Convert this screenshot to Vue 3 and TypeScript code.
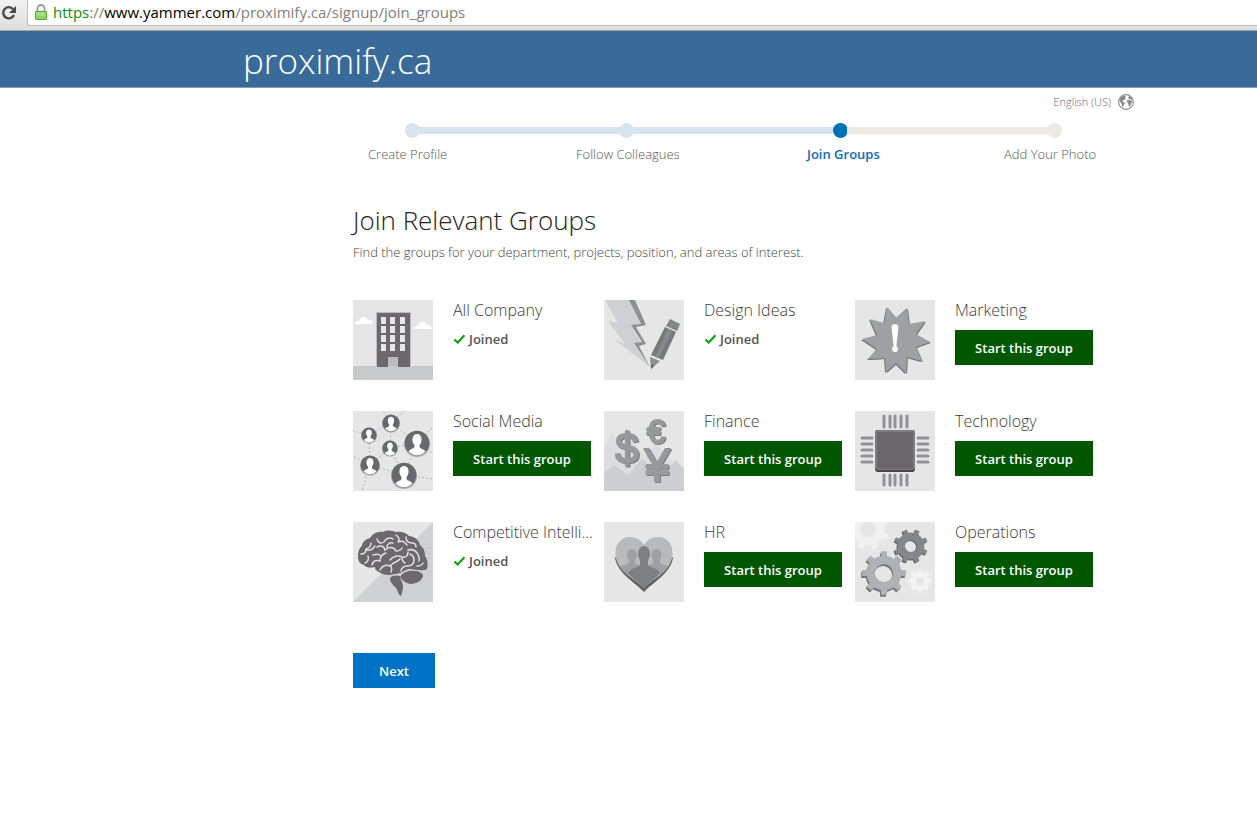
<script setup lang="ts">
type IconName =
  | 'building' | 'design' | 'burst' | 'people' | 'money'
  | 'chip' | 'brain' | 'heart' | 'gears'

interface Group {
  name: string
  icon: IconName
  joined: boolean
}

interface Step {
  label: string
  state: 'done' | 'current' | 'todo'
}

const steps: Step[] = [
  { label: 'Create Profile', state: 'done' },
  { label: 'Follow Colleagues', state: 'done' },
  { label: 'Join Groups', state: 'current' },
  { label: 'Add Your Photo', state: 'todo' },
]

const groups: Group[] = [
  { name: 'All Company', icon: 'building', joined: true },
  { name: 'Design Ideas', icon: 'design', joined: true },
  { name: 'Marketing', icon: 'burst', joined: false },
  { name: 'Social Media', icon: 'people', joined: false },
  { name: 'Finance', icon: 'money', joined: false },
  { name: 'Technology', icon: 'chip', joined: false },
  { name: 'Competitive Intelli...', icon: 'brain', joined: true },
  { name: 'HR', icon: 'heart', joined: false },
  { name: 'Operations', icon: 'gears', joined: false },
]

const burst =
  '32,7 41,18 52,8 54,24 70,21 61,34 75,42 61,47 67,61 52,57 51,73 41,63 31,72 30,58 13,59 22,49 7,39 22,35 15,19 29,23'

const avatars = [
  { x: 38, y: 12, r: 9 },
  { x: 16, y: 24, r: 8 },
  { x: 37, y: 37, r: 8 },
  { x: 64, y: 32, r: 13 },
  { x: 17, y: 54, r: 10 },
  { x: 51, y: 64, r: 13 },
]

// Outline of a toothed wheel with a round hole, centred on (cx, cy).
function gear(cx: number, cy: number, outer: number, hole: number, teeth: number, turn: number): string {
  const inner = outer * 0.79
  const step = (Math.PI * 2) / teeth
  const at = (r: number, a: number) =>
    `${(cx + r * Math.cos(a)).toFixed(2)} ${(cy + r * Math.sin(a)).toFixed(2)}`
  const parts: string[] = []
  for (let i = 0; i < teeth; i++) {
    const a = i * step + turn
    parts.push(at(inner, a - step * 0.23), at(outer, a - step * 0.17), at(outer, a + step * 0.17), at(inner, a + step * 0.23))
    parts.push(at(inner, a + step * 0.5))
  }
  return (
    `M${parts.join('L')}Z` +
    `M${cx - hole} ${cy}a${hole} ${hole} 0 1 0 ${hole * 2} 0a${hole} ${hole} 0 1 0 ${-hole * 2} 0Z`
  )
}
</script>

<template>
  <div class="browser-bar">
    <button class="reload" type="button" aria-label="Reload">
      <svg viewBox="0 0 18 18" width="18" height="18">
        <path d="M13.2 5.2A5.6 5.6 0 1 0 14 11" fill="none" stroke="#4a4a4a" stroke-width="2.4" />
        <path d="M16 2v7H9z" fill="#4a4a4a" />
      </svg>
    </button>
    <div class="address">
      <svg viewBox="0 0 12 16" width="12" height="16" aria-hidden="true">
        <path d="M2.500 8V4.500a3.500 3.500 0 0 1 7 0V8" fill="none" stroke="#999" stroke-width="1.800" />
        <rect x="0.500" y="7.500" width="11" height="8" rx="0.500" fill="#8fd46a" stroke="#5aa53a" />
        <path d="M1.500 9h9M1.500 11h9" stroke="#b5e89a" />
      </svg>
      <span class="url"><span class="scheme">https</span>://<span class="host">www.yammer.com</span>/proximify.ca/signup/join_groups</span>
    </div>
  </div>

  <header class="band">
    <div class="network">proximify.ca</div>
  </header>

  <div class="page">
    <div class="language-row">
      <button class="language" type="button">
        English (US)
        <svg viewBox="0 0 16 16" width="16" height="16" aria-hidden="true">
          <circle cx="8" cy="8" r="7.400" fill="#fff" stroke="#8b8b8b" stroke-width="1.100" />
          <path d="M1.200 5.500 3 3l2.500-1.200L8 2.200 7 3.500l.8 1L6.200 6 5 6.200 4.300 7.500l2.200.7.3 1.500-1.300 1.600-.5 2.400-1-1.200-.2-2.500L2.200 8z" fill="#8b8b8b" />
          <path d="M10 3.200 11.500 2l2 1.500 1.300 2.700-1.300-.4-1-1-1.300.5zM9 6.300l2-.6 2.500.8.8 1.700-1.300 1.600-.5 2-1.300 1-.8-2.200-.3-1.600L8.800 8z" fill="#8b8b8b" />
        </svg>
      </button>
    </div>

    <nav class="progress" aria-label="Sign-up progress">
      <div class="track">
        <template v-for="(step, i) in steps" :key="step.label">
          <span v-if="i > 0" class="bar" :class="step.state" />
          <span class="dot" :class="step.state" />
        </template>
      </div>
      <ol class="labels">
        <li v-for="step in steps" :key="step.label" :class="step.state">{{ step.label }}</li>
      </ol>
    </nav>

    <main class="content">
      <h1>Join Relevant Groups</h1>
      <p class="intro">Find the groups for your department, projects, position, and areas of interest.</p>

      <ul class="groups">
        <li v-for="group in groups" :key="group.name" class="group">
          <svg class="picture" viewBox="0 0 80 80" width="80" height="80" aria-hidden="true">
            <rect width="80" height="80" fill="#e6e6e7" />

            <g v-if="group.icon === 'building'">
              <rect y="66" width="80" height="14" fill="#c8c9cb" />
              <path d="M1 24c1-3 3-3 5-3 1-5 7-6 9-1 3-1 5 1 5 4z" fill="#fff" />
              <path d="M60 29c1-3 3-3 5-3 1-5 7-6 9-1 2-1 5 1 5 4z" fill="#fff" />
              <rect x="23" y="12" width="35" height="54" fill="#bcbcbe" />
              <path d="M24 13h33v54H45V57H35v10H24z" fill="#6b696b" />
              <g fill="#e6e6e7">
                <template v-for="y in [17, 26, 35, 44]" :key="y">
                  <rect v-for="x in [28, 37, 47]" :key="x" :x="x" :y="y" width="5" height="7" />
                </template>
              </g>
            </g>

            <g v-else-if="group.icon === 'design'">
              <path d="M1 0l13 23-10-2 17 23-10-4 35 27-15-22 7-1-11-18 10-1L27 0z" fill="#cfd0d3" />
              <path d="M25 0h6l11 25-10 2 10 17-7 2 11 21-16-24 8-1-11-17 10-1z" fill="#8f9093" />
              <path d="M66 19l10 5-3 7-11-5z" fill="#858689" />
              <path d="M61 27l11 5-13 28-12-5z" fill="#77787b" />
              <path d="M64 29l4 2-13 27-4-1z" fill="#88898c" />
              <path d="M46 57l10 4-9 8z" fill="#8d8e91" />
              <path d="M47 64l3 2-3 3z" fill="#606164" />
            </g>

            <g v-else-if="group.icon === 'burst'">
              <polygon :points="burst" fill="#77787b" transform="translate(1 1)" />
              <polygon :points="burst" fill="#77787b" transform="translate(-1 1)" />
              <polygon :points="burst" fill="#9fa0a3" />
              <path d="M36.500 27c0-4 7-4 7 0l-2 18c0 2-3 2-3 0z" fill="#fff" />
              <circle cx="40" cy="49" r="3" fill="#fff" />
            </g>

            <g v-else-if="group.icon === 'people'">
              <path d="M38 12 30 0M38 12 16 24 0 20M38 12l26 20L80 16M16 24l1 30M37 37 17 54l34 10M37 37l27-5L51 64l29 4M38 12l-1 25 14 27M17 54 0 45M17 54 9 80M51 64 45 80M64 32l16 10M38 12 51 0" fill="none" stroke="#b3b4b7" stroke-width="1" stroke-dasharray="2 2" />
              <g v-for="(a, i) in avatars" :key="i" :transform="`translate(${a.x} ${a.y}) scale(${a.r / 10})`">
                <circle cy="0.800" r="10" fill="#aaabae" />
                <circle r="9.500" fill="#68696c" />
                <path d="M-6.500 6.500c1-2 4-2 4.500-3.500v-1.500C-4.500-1-4-7 0-7s4.500 6 2 8.500V3c.5 1.500 3.500 1.500 4.500 3.500A9 9 0 0 1-6.500 6.500z" fill="#fff" />
              </g>
            </g>

            <g v-else-if="group.icon === 'money'">
              <path d="M0 35 8 22l9 12 8-8 16 20 10-14 18 18 11 12v18H0z" fill="#dcdde0" />
              <path d="M0 62l10-8 14 10 14-16 18 15 8-5 8-9 8 9v22H0z" fill="#cdced2" />
              <g class="coin-signs" text-anchor="middle">
                <text x="23" y="52" font-size="42">$</text>
                <text x="52" y="32" font-size="33">€</text>
                <text x="53" y="70" font-size="46">¥</text>
              </g>
            </g>

            <g v-else-if="group.icon === 'chip'">
              <g stroke="#929295" stroke-width="3" stroke-linecap="round">
                <path v-for="x in [29, 35, 40, 46, 52]" :key="'v' + x" :d="`M${x} 5v11M${x} 64v10`" />
                <path v-for="y in [27, 33, 39, 45, 51]" :key="'h' + y" :d="`M7 ${y}h10M63 ${y}h10`" />
              </g>
              <rect x="20" y="19" width="40" height="42" rx="3" fill="#454446" />
              <rect x="20" y="19" width="40" height="40" rx="3" fill="#7e7d7f" />
              <rect x="22" y="21" width="36" height="37" rx="1" fill="#6a686a" />
            </g>

            <g v-else-if="group.icon === 'brain'">
              <path d="M80 0v80H0z" fill="#cfd0d2" />
              <path d="M5 35c0-5 1-9 4-11 0-4 4-7 8-8 3-5 8-7 13-6 5-3 10-1 13 0 6-1 10 1 13 4 5 0 10 4 11 9 4 3 5 7 5 11 3 4 3 9 2 13-5 3-12 0-18 0-5 1-8 5-14 5-6 2-12 1-16-2-3-1-4-3-4-5-4 1-9 1-11-2-4-1-6-4-6-8z" fill="#6b696b" />
              <path d="M8 32c3 0 5-2 5-5 3-1 5-3 5-6M13 28c4 1 7-1 9-4M19 43c1-5 5-5 8-4 0-5 3-7 6-8M12 41c3-1 4-4 3-7M20 33c3-1 6-1 8 1M24 17c1 4 4 5 7 3 2-4 6-5 9-3M24 25c4-2 7-1 8 3 4-4 9-3 11 1 3 0 5-1 6-3M34 25c0-3 3-5 6-4M43 13c3 2 4 5 2 7M45 20c4-2 7 0 9 3M53 15c0 4 2 6 6 6 3 0 4 2 4 4M27 48c2-4 6-6 10-4 3-4 8-4 10-7M38 44c1 2 1 4 0 6M37 38c3-4 8-5 12-3 4 1 6-2 6-5M48 49c0-3 3-5 6-5 4 0 7-2 7-6M61 38c0-3-2-5-4-6M55 28c4-1 7 0 9 3 2 3 3 5 2 8M64 44c3 0 5-1 6-3M49 35c0 3 1 5 3 6" fill="none" stroke="#dedfe0" stroke-width="1.500" stroke-linecap="round" />
              <path d="M47 55c3-5 9-7 14-6 5 0 9 2 9 5-1 5-7 8-13 8-5-1-8-4-10-7z" fill="#6b696b" />
              <path d="M37 56c2-3 7-3 10-2 0 4 3 6 3 10 0 4-1 7-2 10-3-1-3-6-5-8-3-3-6-6-6-10z" fill="#6b696b" />
            </g>

            <g v-else-if="group.icon === 'heart'">
              <path d="M40 70C31 60 14 52 11 36l4-5h50l4 5C66 52 49 60 40 70z" fill="#5f5f62" />
              <path d="M40 66C31 57 12 49 11.500 32 11 19 20 15 26 15c7 0 12 4 14 8 2-4 7-8 14-8 6 0 15 4 14.500 17C68 49 49 57 40 66z" fill="#b9babc" />
              <g fill="#9fa0a3">
                <ellipse cx="28" cy="33" rx="5" ry="6" />
                <ellipse cx="52.500" cy="33" rx="5" ry="6" />
                <path d="M25 35h6v6c2 2 6 2 9 3 3-1 7-1 9-3v-6h7v6c2 2 6 2 9 3-6 9-18 15-25 22-7-7-19-13-25-22 4-1 8-1 10-3z" />
              </g>
              <g fill="#7f8083">
                <ellipse cx="40" cy="32" rx="6" ry="8" />
                <path d="M36 35h8v8c3 3 9 3 12 8-5 6-11 10-16 15-5-5-11-9-16-15 3-5 9-5 12-8z" />
              </g>
            </g>

            <g v-else fill-rule="evenodd">
              <path :d="gear(13, 7, 21, 8, 8, 0.4)" fill="#f1f1f2" />
              <path :d="gear(65, 59, 12, 4, 8, 0)" fill="#f3f3f4" />
              <path :d="gear(56, 24, 17, 6, 8, 0.4)" fill="#606164" transform="translate(-1 1)" />
              <path :d="gear(56, 24, 17, 6, 8, 0.4)" fill="#858689" />
              <path :d="gear(29, 51, 22, 9, 8, 0)" fill="#77787b" transform="translate(-1 2)" />
              <path :d="gear(29, 51, 22, 9, 8, 0)" fill="#b0b1b4" />
            </g>
          </svg>

          <div class="details">
            <h2>{{ group.name }}</h2>
            <p v-if="group.joined" class="joined">
              <svg viewBox="0 0 12 10" width="12" height="10" aria-hidden="true">
                <path d="M1.500 5.500 4.700 8.500 11.500 1.200" fill="none" stroke="#11a011" stroke-width="2.200" />
              </svg>
              Joined
            </p>
            <button v-else class="start" type="button">Start this group</button>
          </div>
        </li>
      </ul>

      <button class="next" type="button">Next</button>
    </main>
  </div>
</template>

<style>
body {
  margin: 0;
  background: #fff;
}
</style>

<style scoped>
.browser-bar,
.band,
.page,
button {
  font-family: "Open Sans", "Noto Sans", sans-serif;
}

button {
  border: 0;
  padding: 0;
  cursor: pointer;
}

.browser-bar {
  box-sizing: border-box;
  display: flex;
  height: 31px;
  padding-bottom: 4px;
  border-bottom: 1px solid #a5a5a5;
  background: linear-gradient(#f2f2f2, #dedede);
}

.reload {
  width: 27px;
  flex: none;
  display: flex;
  align-items: center;
  background: none;
}

.address {
  flex: 1;
  display: flex;
  align-items: center;
  gap: 6px;
  padding: 0 0 2px 7px;
  border: solid #bdbdbd;
  border-width: 0 0 1px 1px;
  border-radius: 0 0 0 3px;
  background: #fff;
}

.url {
  font-size: 15px;
  line-height: 20px;
  color: #808080;
  white-space: nowrap;
}

.scheme {
  color: #0a8f0a;
}

.host {
  color: #000;
}

.band {
  padding: 6px 0 2px 243px;
  border-bottom: 1px solid #8a9bab;
  background: #396b9a;
}

.network {
  font-size: 35px;
  line-height: 48px;
  font-weight: 300;
  color: #fff;
}

.page {
  box-sizing: border-box;
  max-width: 1134px;
  padding-left: 353px;
}

.language-row {
  display: flex;
  justify-content: flex-end;
  padding-top: 6px;
}

.language {
  display: flex;
  align-items: center;
  gap: 7px;
  background: none;
  font-size: 11px;
  line-height: 16px;
  font-weight: 300;
  color: #62688c;
}

.progress {
  padding: 13px 36px 0 15px;
}

.track {
  display: flex;
  align-items: center;
  padding: 0 36px 0 37px;
}

.dot {
  width: 15px;
  height: 15px;
  border-radius: 50%;
  flex: none;
}

.bar {
  flex: 1;
  height: 7px;
  margin: 0 -1px;
}

.dot.done,
.bar.done,
.bar.current {
  background: #d6e5ef;
}

.dot.todo,
.bar.todo {
  background: #ede8e0;
}

.dot.current {
  background: #0072b4;
}

.labels {
  display: grid;
  grid-template-columns: 208fr 231fr 197fr 94fr;
  margin: 6px 0 0;
  padding: 0;
  list-style: none;
  font-size: 13px;
  line-height: 20px;
  font-weight: 300;
  color: #555;
  white-space: nowrap;
}

.labels .current {
  font-weight: 600;
  color: #0a6cc0;
}

h1 {
  margin: 38px 0 0;
  font-size: 26px;
  line-height: 36px;
  font-weight: 300;
  color: #222;
}

.intro {
  margin: 4px 0 0;
  font-size: 13px;
  line-height: 20px;
  font-weight: 300;
  color: #444;
}

.groups {
  display: grid;
  grid-template-columns: repeat(3, 238px);
  gap: 31px 13px;
  margin: 38px 0 0;
  padding: 0;
  list-style: none;
}

.group {
  display: flex;
  gap: 20px;
}

.picture {
  flex: none;
  display: block;
}

.details {
  flex: 1;
  min-width: 0;
}

h2 {
  margin: 0;
  font-size: 16px;
  line-height: 20px;
  font-weight: 300;
  color: #3a3a3a;
  white-space: nowrap;
}

.joined {
  display: flex;
  align-items: center;
  gap: 4px;
  margin: 10px 0 0;
  font-size: 13px;
  line-height: 18px;
  font-weight: 600;
  color: #555;
}

.start,
.next {
  display: block;
  height: 35px;
  font-size: 13px;
  line-height: 20px;
  font-weight: 600;
  color: #fff;
}

.start {
  width: 100%;
  margin-top: 10px;
  background: #005700;
}

.next {
  width: 82px;
  margin-top: 51px;
  background: #0072c6;
}

.coin-signs {
  font-family: "Liberation Sans", sans-serif;
  fill: #98999c;
  stroke: #98999c;
  stroke-width: 2px;
  stroke-linejoin: round;
  filter: drop-shadow(1px 1px 0 #7b7c7f);
}
</style>
